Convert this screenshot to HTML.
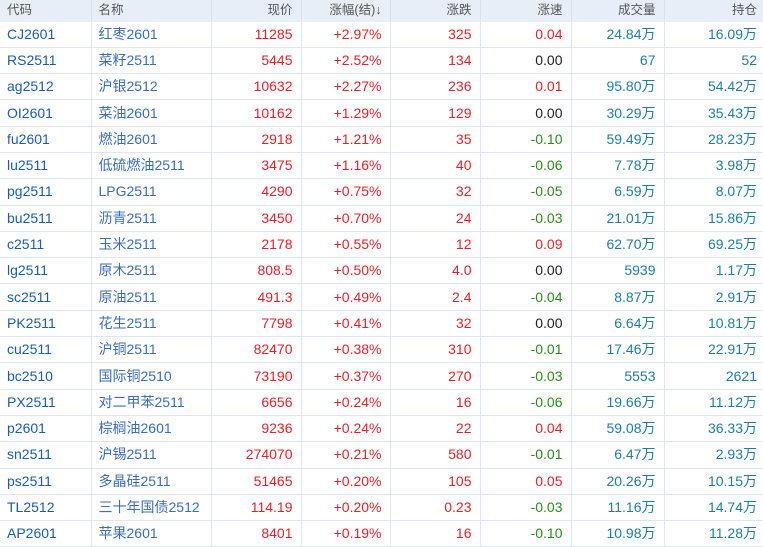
<!DOCTYPE html>
<html><head><meta charset="utf-8"><style>
*{margin:0;padding:0;box-sizing:border-box}
body{width:763px;height:547px;overflow:hidden;background:#fff;font-family:"Liberation Sans","Noto Sans CJK SC",sans-serif;font-size:14px}
table{border-collapse:collapse;table-layout:fixed;width:763px}
td{border:1px solid #dce6f4;height:26.3px;padding:0 8px 0 7px;white-space:nowrap;overflow:hidden;line-height:15px;vertical-align:middle}
tr.h td{height:21px;background:#e8eef8;color:#555;font-size:12.5px;border-color:#e8eef8 #d6e0f0}
tr:first-child td{border-top:none}
td:first-child{border-left:none}td:last-child{border-right:none;padding-right:6px}
.r{text-align:right}
.c{color:#1a5cb0}.n{color:#3a6cc0}.red{color:#e5202a}.g{color:#2a8a1a}.k{color:#222}.t{color:#1d7fa0}
</style></head><body>
<table>
<colgroup><col style="width:91px"><col style="width:120px"><col style="width:90px"><col style="width:89px"><col style="width:90px"><col style="width:91px"><col style="width:93px"><col style="width:99px"></colgroup>
<tr class="h"><td>代码</td><td>名称</td><td class="r">现价</td><td class="r">涨幅(结)↓</td><td class="r">涨跌</td><td class="r">涨速</td><td class="r">成交量</td><td class="r">持仓</td></tr>
<tr><td class="c">CJ2601</td><td class="n">红枣2601</td><td class="r red">11285</td><td class="r red">+2.97%</td><td class="r red">325</td><td class="r red">0.04</td><td class="r t">24.84万</td><td class="r t">16.09万</td></tr>
<tr><td class="c">RS2511</td><td class="n">菜籽2511</td><td class="r red">5445</td><td class="r red">+2.52%</td><td class="r red">134</td><td class="r k">0.00</td><td class="r t">67</td><td class="r t">52</td></tr>
<tr><td class="c">ag2512</td><td class="n">沪银2512</td><td class="r red">10632</td><td class="r red">+2.27%</td><td class="r red">236</td><td class="r red">0.01</td><td class="r t">95.80万</td><td class="r t">54.42万</td></tr>
<tr><td class="c">OI2601</td><td class="n">菜油2601</td><td class="r red">10162</td><td class="r red">+1.29%</td><td class="r red">129</td><td class="r k">0.00</td><td class="r t">30.29万</td><td class="r t">35.43万</td></tr>
<tr><td class="c">fu2601</td><td class="n">燃油2601</td><td class="r red">2918</td><td class="r red">+1.21%</td><td class="r red">35</td><td class="r g">-0.10</td><td class="r t">59.49万</td><td class="r t">28.23万</td></tr>
<tr><td class="c">lu2511</td><td class="n">低硫燃油2511</td><td class="r red">3475</td><td class="r red">+1.16%</td><td class="r red">40</td><td class="r g">-0.06</td><td class="r t">7.78万</td><td class="r t">3.98万</td></tr>
<tr><td class="c">pg2511</td><td class="n">LPG2511</td><td class="r red">4290</td><td class="r red">+0.75%</td><td class="r red">32</td><td class="r g">-0.05</td><td class="r t">6.59万</td><td class="r t">8.07万</td></tr>
<tr><td class="c">bu2511</td><td class="n">沥青2511</td><td class="r red">3450</td><td class="r red">+0.70%</td><td class="r red">24</td><td class="r g">-0.03</td><td class="r t">21.01万</td><td class="r t">15.86万</td></tr>
<tr><td class="c">c2511</td><td class="n">玉米2511</td><td class="r red">2178</td><td class="r red">+0.55%</td><td class="r red">12</td><td class="r red">0.09</td><td class="r t">62.70万</td><td class="r t">69.25万</td></tr>
<tr><td class="c">lg2511</td><td class="n">原木2511</td><td class="r red">808.5</td><td class="r red">+0.50%</td><td class="r red">4.0</td><td class="r k">0.00</td><td class="r t">5939</td><td class="r t">1.17万</td></tr>
<tr><td class="c">sc2511</td><td class="n">原油2511</td><td class="r red">491.3</td><td class="r red">+0.49%</td><td class="r red">2.4</td><td class="r g">-0.04</td><td class="r t">8.87万</td><td class="r t">2.91万</td></tr>
<tr><td class="c">PK2511</td><td class="n">花生2511</td><td class="r red">7798</td><td class="r red">+0.41%</td><td class="r red">32</td><td class="r k">0.00</td><td class="r t">6.64万</td><td class="r t">10.81万</td></tr>
<tr><td class="c">cu2511</td><td class="n">沪铜2511</td><td class="r red">82470</td><td class="r red">+0.38%</td><td class="r red">310</td><td class="r g">-0.01</td><td class="r t">17.46万</td><td class="r t">22.91万</td></tr>
<tr><td class="c">bc2510</td><td class="n">国际铜2510</td><td class="r red">73190</td><td class="r red">+0.37%</td><td class="r red">270</td><td class="r g">-0.03</td><td class="r t">5553</td><td class="r t">2621</td></tr>
<tr><td class="c">PX2511</td><td class="n">对二甲苯2511</td><td class="r red">6656</td><td class="r red">+0.24%</td><td class="r red">16</td><td class="r g">-0.06</td><td class="r t">19.66万</td><td class="r t">11.12万</td></tr>
<tr><td class="c">p2601</td><td class="n">棕榈油2601</td><td class="r red">9236</td><td class="r red">+0.24%</td><td class="r red">22</td><td class="r red">0.04</td><td class="r t">59.08万</td><td class="r t">36.33万</td></tr>
<tr><td class="c">sn2511</td><td class="n">沪锡2511</td><td class="r red">274070</td><td class="r red">+0.21%</td><td class="r red">580</td><td class="r g">-0.01</td><td class="r t">6.47万</td><td class="r t">2.93万</td></tr>
<tr><td class="c">ps2511</td><td class="n">多晶硅2511</td><td class="r red">51465</td><td class="r red">+0.20%</td><td class="r red">105</td><td class="r red">0.05</td><td class="r t">20.26万</td><td class="r t">10.15万</td></tr>
<tr><td class="c">TL2512</td><td class="n">三十年国债2512</td><td class="r red">114.19</td><td class="r red">+0.20%</td><td class="r red">0.23</td><td class="r g">-0.03</td><td class="r t">11.16万</td><td class="r t">14.74万</td></tr>
<tr><td class="c">AP2601</td><td class="n">苹果2601</td><td class="r red">8401</td><td class="r red">+0.19%</td><td class="r red">16</td><td class="r g">-0.10</td><td class="r t">10.98万</td><td class="r t">11.28万</td></tr>
</table>
</body></html>
